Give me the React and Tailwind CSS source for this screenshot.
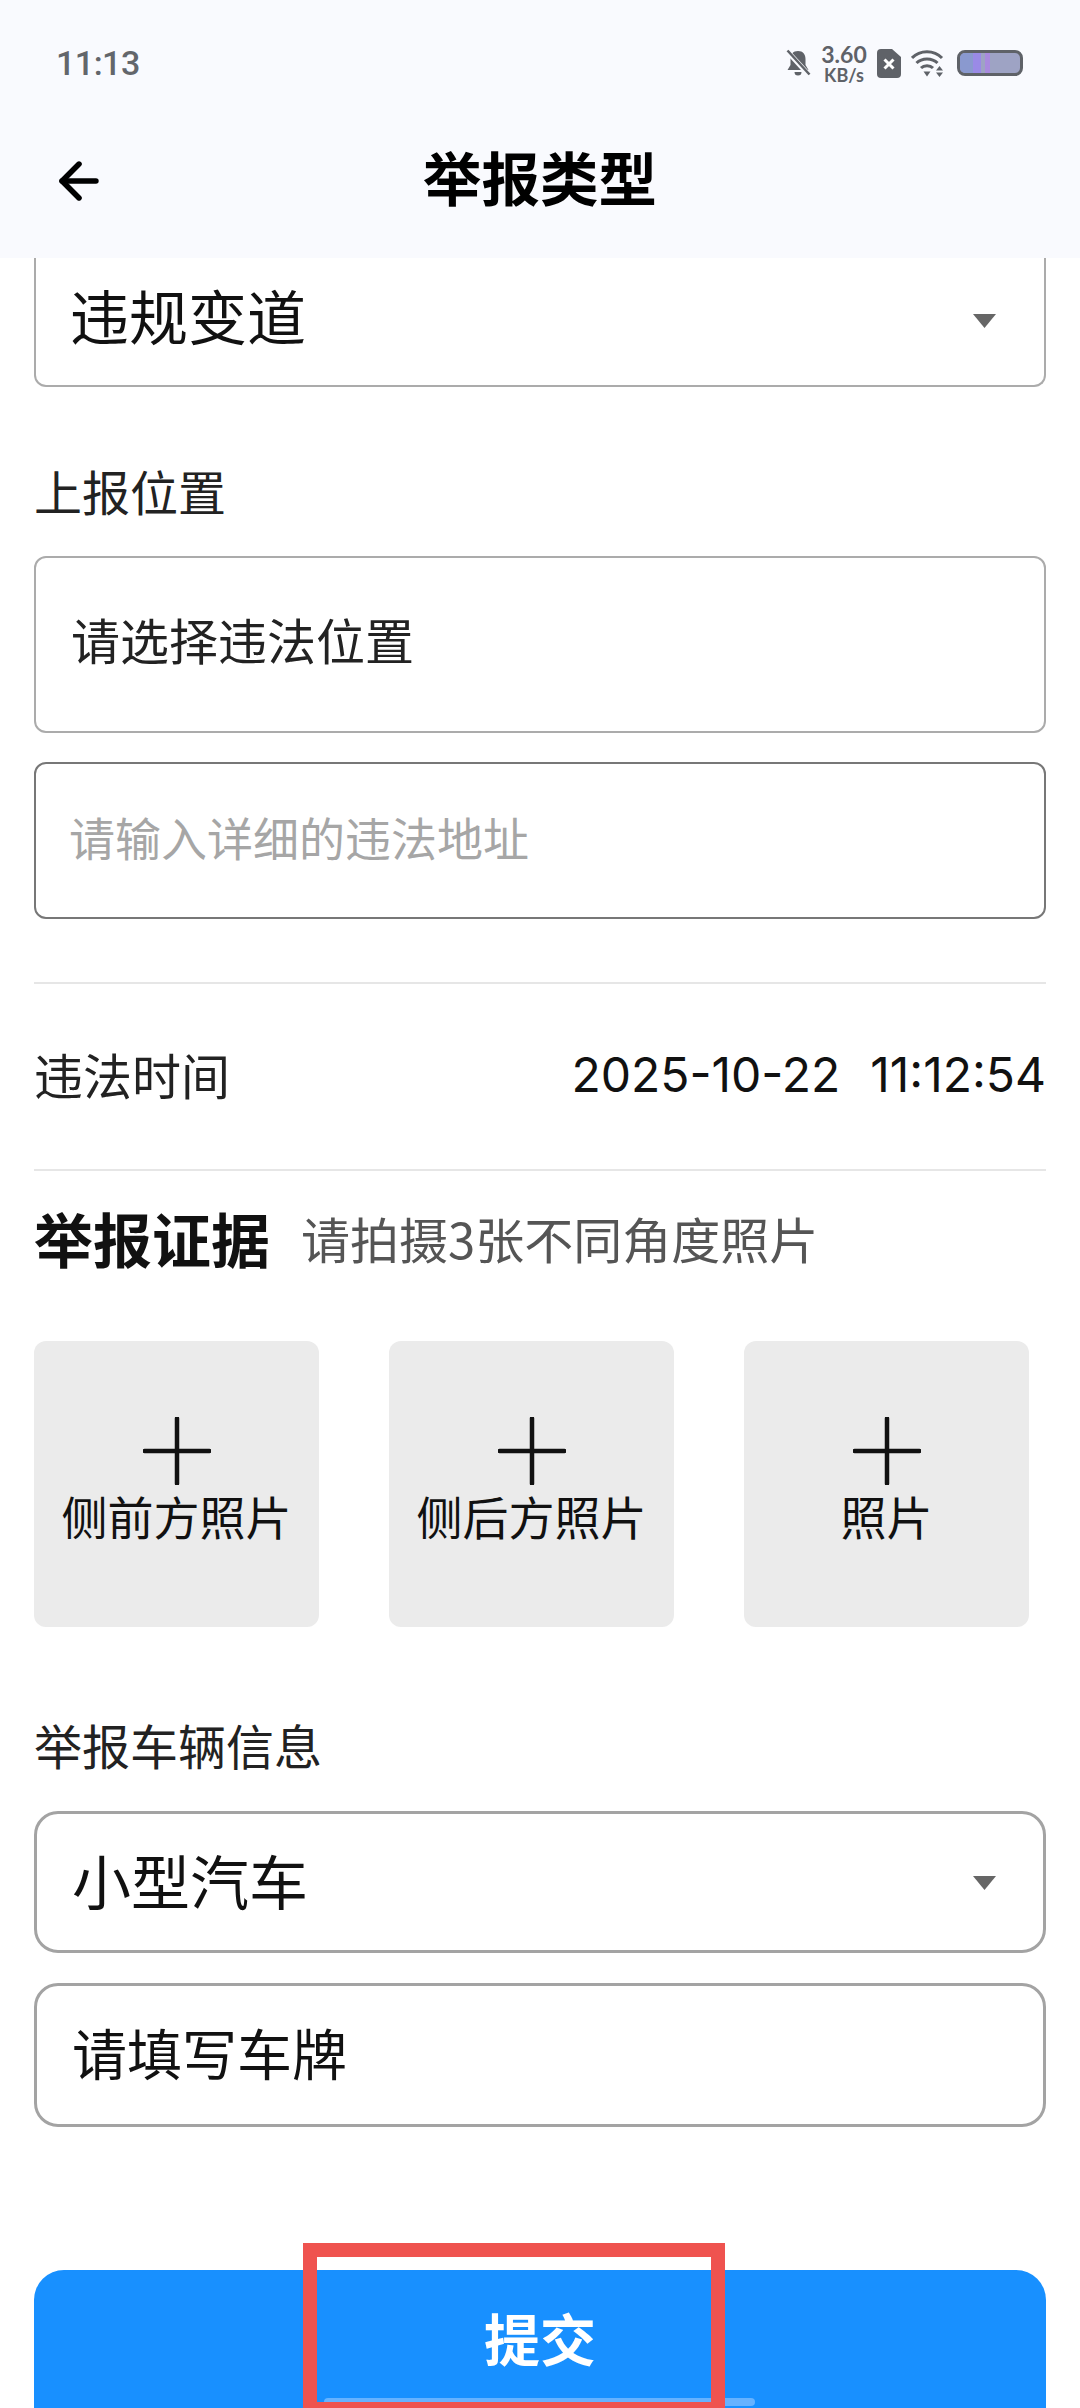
import React from "react";
import { ArrowLeft } from "lucide-react";

const cjk = "font-['Noto_Sans_CJK_SC','Noto_Sans',sans-serif]";

const Caret = ({ className }) => (
  <svg width="25" height="16" viewBox="0 0 25 16" className={className}>
    <path d="M1 1h23L12.500 15z" fill="#666" />
  </svg>
);

const StatusIcons = () => (
  <div className="flex items-center text-[#5f6268]">
    <svg width="26" height="28" viewBox="0 0 26 28" className="mr-[8px]">
      <path d="M13 2c-5 0-7.500 3.500-7.500 8v6L2.500 21h21l-3-5v-6c0-4.500-2.500-8-7.500-8zM9.500 23a3.500 3.500 0 0 0 7 0z" fill="#5f6268" />
      <path d="M2 2l22 24" stroke="#f9fafe" strokeWidth="5" />
      <path d="M2.500 1.500l22 24" stroke="#5f6268" strokeWidth="2.500" />
    </svg>
    <div className="mr-[8px] flex w-[50px] flex-col items-center font-['Lato',sans-serif] font-bold">
      <span className="text-[23px] leading-[23px]">3.60</span>
      <span className="text-[18px] leading-[18px]">KB/s</span>
    </div>
    <svg width="24" height="29" viewBox="0 0 24 29" className="mr-[10px]">
      <path d="M4 0h11l9 8v17a4 4 0 0 1-4 4H4a4 4 0 0 1-4-4V4a4 4 0 0 1 4-4z" fill="#5f6268" />
      <path d="M7.500 10.500l9 9M16.500 10.500l-9 9" stroke="#fff" strokeWidth="3" />
    </svg>
    <svg width="35" height="27" viewBox="0 0 35 27" className="mr-[11px]">
      <g fill="none" stroke="#5f6268" strokeWidth="3">
        <path d="M1 8c8-8.500 22-8.500 30 0" />
        <path d="M5.500 13c5.500-5.500 15.500-5.500 21 0" />
        <path d="M10 18c3-3 9-3 12 0" />
      </g>
      <path d="M12.500 21.500h7L16 26.500z" fill="#5f6268" />
      <path d="M28.500 16l3.500 4.500h-7zM28.500 27l3.500-4.500h-7z" fill="#5f6268" />
    </svg>
    <div className="relative h-[26px] w-[66px] overflow-hidden rounded-[8px] border-[3px] border-[#5f6268] bg-[#9ea3c4]">
      <div className="absolute inset-y-0 left-0 w-[13px] bg-[#8a99cf]" />
      <div className="absolute inset-y-0 left-[13px] w-[8px] bg-[#9a8ae6]" />
      <div className="absolute inset-y-0 left-[21px] w-[4px] bg-[#9ea3c4]" />
      <div className="absolute inset-y-0 left-[25px] w-[5px] bg-[#a98ade]" />
    </div>
  </div>
);

const Plus = () => (
  <svg width="68" height="68" viewBox="0 0 68 68">
    <path d="M34 1.500v65M1.500 34h65" stroke="#111" strokeWidth="4.500" strokeLinecap="round" fill="none" />
  </svg>
);

const PhotoCard = ({ label }) => (
  <div className="flex h-[286px] w-[285px] flex-col items-center rounded-[12px] bg-[#ebebeb] pt-[76px]">
    <Plus />
    <span className="mt-[1px] text-[46px] leading-[58px] text-[#111]">{label}</span>
  </div>
);

export default function App() {
  return (
    <div className={`relative h-[2408px] w-[1080px] overflow-hidden bg-white ${cjk}`}>
      {/* 顶部状态栏和标题 */}
      <div className="h-[258px] bg-[#f9fafe]">
        <div className="flex h-[126px] items-center justify-between pl-[56px] pr-[57px]">
          <span className="font-['Roboto',sans-serif] text-[34px] font-medium tracking-[-0.5px] text-[#63666b]">11:13</span>
          <StatusIcons />
        </div>
        <div className="relative flex h-[106px] items-center justify-center pb-[5px]">
          <ArrowLeft className="absolute left-[50px] top-[26px]" size={58} color="#000" strokeWidth={2.300} absoluteStrokeWidth={false} />
          <span className="text-[58.500px] font-bold leading-none text-black">举报类型</span>
        </div>
      </div>

      <div className="px-[34px]">
        <div className="flex h-[129px] items-center justify-between rounded-b-[12px] border-x-2 border-b-2 border-[#ababab] pb-[9px] pl-[34px] pr-[47px]">
          <span className="-translate-y-[3px] text-[59px] leading-none text-[#111]">违规变道</span>
          <Caret className="translate-y-[4px]" />
        </div>

        <div className="mt-[77px] text-[48px] leading-[52px] text-[#222]">上报位置</div>

        <div className="mt-[40px] flex h-[177px] items-center rounded-[12px] border-2 border-[#ababab] pb-[12px] pl-[35px]">
          <span className="text-[49px] leading-none text-[#222]">请选择违法位置</span>
        </div>
        <div className="mt-[29px] flex h-[157px] items-center rounded-[12px] border-2 border-[#777] pb-[10px] pl-[33px]">
          <span className="text-[46px] leading-none text-[#a6a6a6]">请输入详细的违法地址</span>
        </div>

        <div className="mt-[63px] h-[2px] bg-[#e6e6e6]" />
        <div className="flex h-[185px] items-center justify-between pb-[3px]">
          <span className="-translate-y-[2px] text-[49px] leading-none text-[#222]">违法时间</span>
          <div className="flex gap-[30px] font-['Inter',sans-serif] text-[48px] leading-none text-[#111]">
            <span>2025-10-22</span>
            <span>11:12:54</span>
          </div>
        </div>
        <div className="h-[2px] bg-[#e6e6e6]" />

        <div className="mt-[35px] flex items-center">
          <span className="text-[59px] font-bold leading-[64px] text-[#111]">举报证据</span>
          <span className="ml-[31px] text-[49px] leading-[64px] text-[#555]">请拍摄3张不同角度照片</span>
        </div>

        <div className="mt-[71px] flex gap-[70px]">
          <PhotoCard label="侧前方照片" />
          <PhotoCard label="侧后方照片" />
          <PhotoCard label="照片" />
        </div>

        <div className="mt-[91px] text-[48px] leading-[52px] text-[#222]">举报车辆信息</div>

        <div className="mt-[41px] flex h-[142px] items-center justify-between rounded-[24px] border-[3px] border-[#a3a3a3] pl-[35px] pr-[46px]">
          <span className="-translate-y-[3px] text-[59px] leading-none text-[#111]">小型汽车</span>
          <Caret className="translate-y-[1px]" />
        </div>
        <div className="mt-[30px] flex h-[144px] items-center rounded-[24px] border-[3px] border-[#a3a3a3] pb-[8px] pl-[35px]">
          <span className="text-[55px] leading-none text-[#111]">请填写车牌</span>
        </div>

        <div className="mt-[143px] flex h-[180px] justify-center rounded-[30px] bg-[#1890ff] pt-[36px]">
          <span className="text-[56px] font-bold leading-[62px] text-white">提交</span>
        </div>
      </div>

      {/* 系统手势条 */}
      <div className="absolute left-[324px] top-[2398px] h-[8px] w-[431px] rounded-full bg-[#66b2ff]" />
      {/* 标注红框 */}
      <div className="absolute left-[303px] top-[2243px] h-[165px] w-[422px] border-x-[14px] border-t-[14px] border-b-[6px] border-[#ef534f]" />
    </div>
  );
}
